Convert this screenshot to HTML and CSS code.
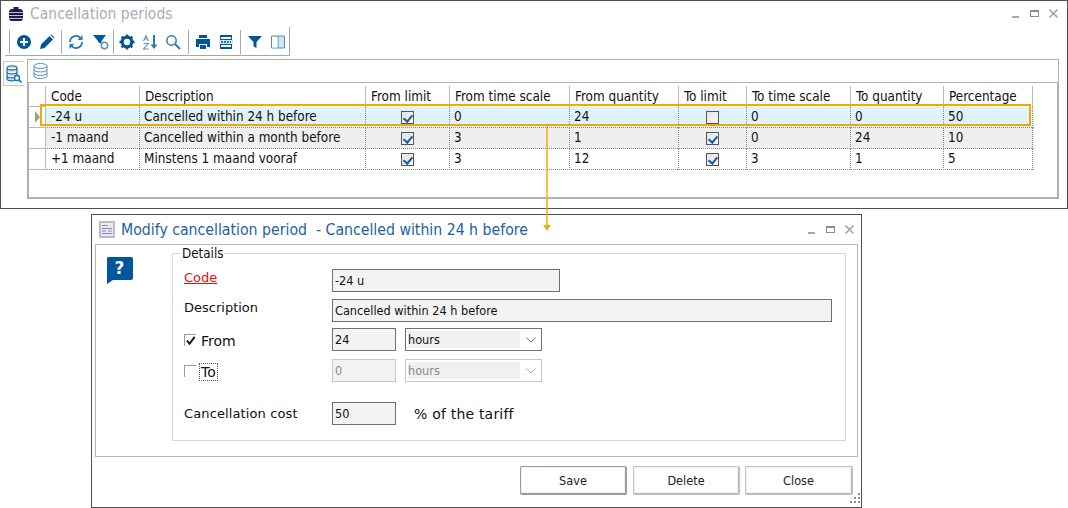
FILE: index.html
```html
<!DOCTYPE html>
<html lang="en">
<head>
<meta charset="utf-8">
<title>Cancellation periods</title>
<link rel="stylesheet" href="styles.css">
</head>
<body>
<div class="desktop">
  <section class="window list-window">
    <header class="list-title">
      <svg class="app-icon" viewBox="0 0 16 16"><path fill="#1d1a55" d="M5.500 1h5v2h2.500l2 2v8.500l-2 1.500h-10l-2-1.500v-8.500l2-2h2.500z"/><path fill="none" stroke="#b9bfd6" d="M1 6.500h14M1 9.500h14M1 12.500h14"/></svg>
      <span class="list-title-text">Cancellation periods</span>
      <div class="win-controls"><i class="c-min"></i><i class="c-max"></i><svg class="c-x" viewBox="0 0 9 9"><path d="M.5.500l8 8M8.500.500l-8 8" stroke="#a9a9a9" stroke-width="1.600"/></svg></div>
    </header>
    <div class="toolbar">
      <div class="tool-group g1">
        <svg viewBox="0 0 16 16"><circle cx="8" cy="8" r="7" fill="#00569c"/><path d="M8 4v8M4 8h8" stroke="#fff" stroke-width="2.200"/></svg>
        <svg viewBox="0 0 16 16"><path fill="#00569c" d="M1 15l1-4.500L10.500 2l3.500 3.500L5.500 14zM11.500 1l1-.500 3 3-.500 1z"/></svg>
      </div>
      <div class="tool-group g2">
        <svg viewBox="0 0 16 16"><path fill="none" stroke="#2d78b8" stroke-width="1.800" d="M2 8a6 6 0 0 1 10.500-4M14 8a6 6 0 0 1-10.500 4"/><path fill="#2d78b8" d="M14.500 1v5h-5zM1.500 15v-5h5z"/></svg>
        <svg viewBox="0 0 16 16"><path fill="#00569c" d="M0 1h13L8.500 7v3L5 8V7z"/><circle cx="11.500" cy="11.500" r="3.200" fill="none" stroke="#5a93c4" stroke-width="1.500"/></svg>
      </div>
      <div class="tool-group g3">
        <svg viewBox="0 0 16 16"><circle cx="8" cy="8" r="4.800" fill="none" stroke="#00569c" stroke-width="3.200"/><path d="M8 .5v15M.5 8h15M2.700 2.700l10.600 10.600M13.300 2.700L2.700 13.300" stroke="#00569c" stroke-width="2.400" stroke-dasharray="2.600 9.800"/></svg>
        <svg viewBox="0 0 16 16"><path fill="none" stroke="#5a93c4" stroke-width="1.100" d="M1.500 7L4 1.500 6.500 7M2.500 5h3M1.500 9.500h5L1.500 15h5"/><path fill="#2d78b8" d="M11 1h2v9.500h2.500L12 15l-3.500-4.500H11z"/></svg>
        <svg viewBox="0 0 16 16"><circle cx="6.500" cy="6.500" r="4.700" fill="none" stroke="#2d78b8" stroke-width="1.500"/><path d="M10 10l5 5" stroke="#2d78b8" stroke-width="2"/></svg>
      </div>
      <div class="tool-group g4">
        <svg viewBox="0 0 16 16"><path fill="#00569c" d="M4 1h8v3H4zM1 5h14v8h-3v-3H4v3H1zM5 11h6v4H5z"/></svg>
        <svg viewBox="0 0 16 16"><path fill="#00569c" d="M2 1h12v14H2z"/><path fill="#fff" d="M3 3h10v2H3zM3 11h10v2H3z"/><path fill="#cfe0ef" d="M1 6h14v4H1z"/><path d="M3 8h10" stroke="#00569c" stroke-width="1.500" stroke-dasharray="2 1"/></svg>
      </div>
      <div class="tool-group g5">
        <svg viewBox="0 0 16 16"><path fill="#00569c" d="M1 2h14L9.500 8v6l-3-1.500V8z"/></svg>
        <svg viewBox="0 0 16 16"><path fill="#d5e4f1" stroke="#4d8ec4" d="M1.500 2h13v12h-13z"/><path stroke="#4d8ec4" d="M8 2v12"/><path fill="#fff" d="M2 3h5.500v10.500H2z"/></svg>
      </div>
    </div>
    <div class="list-body">
      <div class="side-tab">
        <svg viewBox="0 0 16 18"><path fill="#cfe0ef" stroke="#1f6aa6" stroke-width="1.200" d="M1 3c0-3 10-3 10 0v11c0 2.500-10 2.500-10 0zM1 3c0 2.500 10 2.500 10 0M1 7c0 2.500 10 2.500 10 0M1 11c0 2.500 10 2.500 10 0"/><circle cx="11" cy="13" r="2.500" fill="#fff" stroke="#1f6aa6" stroke-width="1.300"/><path d="M13 15l2.500 2.500" stroke="#1f6aa6" stroke-width="1.600"/></svg>
      </div>
      <div class="grid-panel">
        <div class="grid-bar">
          <svg viewBox="0 0 15 16"><g fill="none" stroke="#5a93c4"><ellipse cx="7.500" cy="3" rx="6.500" ry="2.500"/><path d="M1 3v10c0 3.300 13 3.300 13 0V3M1 6.500c0 3.300 13 3.300 13 0M1 10c0 3.300 13 3.300 13 0"/></g></svg>
        </div>
        <div class="grid-area">
          <div class="row head">
            <div class="ind"></div><div>Code</div><div>Description</div><div>From limit</div><div>From time scale</div><div>From quantity</div><div>To limit</div><div>To time scale</div><div>To quantity</div><div>Percentage</div>
          </div>
          <div class="row selected">
            <div class="ind"><i class="pointer"></i></div><div class="code">-24 u</div><div>Cancelled within 24 h before</div><div class="mid"><i class="chk on"></i></div><div>0</div><div>24</div><div class="mid"><i class="chk"></i></div><div>0</div><div>0</div><div>50</div>
          </div>
          <div class="row alt">
            <div class="ind"></div><div class="code">-1 maand</div><div>Cancelled within a month before</div><div class="mid"><i class="chk on"></i></div><div>3</div><div>1</div><div class="mid"><i class="chk on"></i></div><div>0</div><div>24</div><div>10</div>
          </div>
          <div class="row">
            <div class="ind"></div><div class="code">+1 maand</div><div>Minstens 1 maand vooraf</div><div class="mid"><i class="chk on"></i></div><div>3</div><div>12</div><div class="mid"><i class="chk on"></i></div><div>3</div><div>1</div><div>5</div>
          </div>
        </div>
      </div>
    </div>
  </section>

  <section class="window dialog">
    <header class="dlg-title">
      <svg class="dlg-icon" viewBox="0 0 16 17"><path fill="#b9b9d6" d="M0 0h16v17H0z"/><path fill="#e9e9f2" d="M2 2h12v13H2z"/><path stroke="#8a8ab0" stroke-width="1.200" d="M3 4.500h6M3 7.500h10M3 10h4M9 10h4M3 12.500h10"/></svg>
      <span class="dlg-title-text">Modify cancellation period&nbsp; - Cancelled within 24 h before</span>
      <div class="win-controls"><i class="c-min"></i><i class="c-max"></i><svg class="c-x" viewBox="0 0 9 9"><path d="M.5.500l8 8M8.500.500l-8 8" stroke="#a9a9a9" stroke-width="1.600"/></svg></div>
    </header>
    <div class="dlg-panel">
      <svg class="help" viewBox="0 0 27 27"><path fill="#00569c" d="M2 0h23a2 2 0 0 1 2 2v19a2 2 0 0 1-2 2H7l-6 4V2a2 2 0 0 1 1-2z"/></svg>
      <span class="help-mark">?</span>
      <fieldset class="details">
        <legend>Details</legend>
        <div class="form-row r-code"><span class="lbl req">Code</span><span class="inp w228">-24 u</span></div>
        <div class="form-row r-desc"><span class="lbl">Description</span><span class="inp w500">Cancelled within 24 h before</span></div>
        <div class="form-row r-from">
          <span class="lbl chk-lbl"><i class="flat on"><svg viewBox="0 0 12 12"><path d="M2 6l3 3.500L10.500 2" fill="none" stroke="#111" stroke-width="2"/></svg></i><span class="big">From</span></span>
          <span class="inp w65">24</span><span class="sel"><span class="sel-v">hours</span><svg viewBox="0 0 10 6"><path d="M.5.500L5 5 9.500.500" fill="none" stroke="#777"/></svg></span>
        </div>
        <div class="form-row r-to">
          <span class="lbl chk-lbl"><i class="flat"></i><span class="big focus">To</span></span>
          <span class="inp w65 off">0</span><span class="sel off"><span class="sel-v">hours</span><svg viewBox="0 0 10 6"><path d="M.5.500L5 5 9.500.500" fill="none" stroke="#aaa"/></svg></span>
        </div>
        <div class="form-row r-cost"><span class="lbl">Cancellation cost</span><span class="inp w65">50</span><span class="suffix">% of the tariff</span></div>
      </fieldset>
    </div>
    <footer class="dlg-actions">
      <button class="btn save">Save</button><button class="btn">Delete</button><button class="btn close">Close</button>
    </footer>
    <svg class="grip" viewBox="0 0 11 11"><path d="M8 0h2v2H8zM4 4h2v2H4zM8 4h2v2H8zM0 8h2v2H0zM4 8h2v2H4zM8 8h2v2H8z" fill="#8a8a8a"/></svg>
  </section>

  <div class="highlight"></div>
  <svg class="connector" viewBox="0 0 8 107"><path d="M4 0v102" stroke="#f5ac10" stroke-width="1.500"/><path d="M0 100h8l-4 6z" fill="#f5ac10"/></svg>
</div>
</body>
</html>
```
FILE: styles.css
```css
* { box-sizing: border-box; }
html, body { margin: 0; padding: 0; background: #fff; }
body { font-family: "DejaVu Sans", sans-serif; color: #111; }
.desktop { position: relative; width: 1068px; height: 508px; overflow: hidden; background: #fff; }
.window { position: absolute; background: #fff; border: 1px solid #505050; }
.list-window { left: 0; top: 0; width: 1068px; height: 209px; }
.dialog { left: 91px; top: 214px; width: 771px; height: 294px; }

.list-title { display: flex; align-items: center; height: 26px; padding-left: 7px; }
.app-icon { width: 16px; height: 16px; }
.list-title-text { margin-left: 6px; font: 15.500px/26px "DejaVu Sans Condensed", sans-serif; color: #a7aeb8; }
.win-controls { margin-left: auto; display: flex; align-items: center; gap: 9px; padding-right: 9px; margin-bottom: 2px; }
.win-controls i { display: block; }
.c-min { width: 7px; height: 2px; background: #a9a9a9; margin-top: 7px; margin-right: 2px; }
.c-max { width: 9px; height: 7px; border: 1px solid #8a8a8a; border-top-width: 2px; }
.c-x { width: 9px; height: 9px; margin-left: 1px; }

.toolbar { display: flex; align-items: center; width: 285px; height: 29px; margin-left: 4px; border-bottom: 1px solid #a8a8a8; border-right: 1px solid #a8a8a8; padding-left: 4px; padding-top: 1px; }
.tool-group { display: flex; align-items: center; height: 24px; border-left: 1px solid #a8a8a8; }
.tool-group svg { width: 16px; height: 16px; flex: none; }
.g1 { width: 52px; gap: 7px; padding-left: 6px; }
.g2 { width: 52px; gap: 9px; padding-left: 6px; }
.g3 { width: 75px; gap: 7px; padding-left: 5px; }
.g4 { width: 52px; gap: 7px; padding-left: 6px; }
.g5 { width: 48px; gap: 7px; padding-left: 6px; }

.list-body { display: flex; align-items: flex-start; margin-top: 3px; padding-left: 2px; }
.side-tab { width: 21px; height: 25px; margin-top: 2px; border: 1px solid #c8c8c8; border-right: 0; display: flex; align-items: center; justify-content: center; }
.side-tab svg { width: 16px; height: 18px; }
.grid-panel { width: 1032px; margin-left: 3px; }
.grid-bar { height: 24px; border: 1px solid #b0b0b0; padding: 3px 0 0 5px; }
.grid-bar svg { display: block; width: 15px; height: 16px; }
.grid-area { height: 116px; border: solid #b0b0b0; border-width: 0 2px 2px 2px; padding-top: 3px; }
.row { display: grid; grid-template-columns: 17px 94px 226px 84px 120px 109px 68px 104px 93px 89px; width: 1005px; height: 21px; font: 13.400px/20px "DejaVu Sans Condensed", sans-serif; border-bottom: 1px dotted #8c8c8c; }
.row > div { padding-left: 4px; border-right: 1px dotted #8c8c8c; white-space: nowrap; overflow: hidden; }
.row > div.code { padding-left: 5px; }
.row > div.ind { padding: 0; border-right: 1px solid #b8b8b8; border-bottom: 1px solid #b8b8b8; height: 21px; display: flex; align-items: center; padding-left: 6px; }
.head { border-bottom: 0; }
.head > div { padding: 1px 0 0 5px; border-right: 1px solid #b8b8b8; }
.selected { background: #e0f3fd; }
.alt { background: #efefef; }
.selected .ind, .alt .ind { background: #fff; }
.pointer { display: block; width: 0; height: 0; border-left: 5px solid #9a9a9a; border-top: 6px solid transparent; border-bottom: 6px solid transparent; }
.mid { display: flex; align-items: center; justify-content: center; padding: 0 !important; }
.chk { position: relative; display: block; width: 13px; height: 13px; border: 1px solid #555; background: linear-gradient(135deg, #e4e4e4, #fafafa); }
.chk.on::after { content: ""; position: absolute; left: 3px; top: 1px; width: 4px; height: 7px; border: solid #0f5ea8; border-width: 0 2px 2px 0; transform: rotate(40deg); }

.highlight { position: absolute; left: 40px; top: 104px; width: 991px; height: 22px; border: 2px solid #f4a900; }
.connector { position: absolute; left: 543px; top: 125px; width: 8px; height: 107px; }

.dlg-title { display: flex; align-items: center; height: 29px; padding-left: 7px; }
.dlg-title .win-controls { padding-right: 7px; margin-bottom: 1px; }
.dlg-icon { width: 16px; height: 17px; }
.dlg-title-text { margin-left: 6px; font: 15.700px/29px "DejaVu Sans Condensed", sans-serif; color: #1e5fa4; white-space: nowrap; }
.dlg-panel { position: relative; height: 213px; margin: 0 3px; border: 1px solid #b8b8b8; padding: 0 11px 0 76px; }
.help { position: absolute; left: 10px; top: 12px; width: 27px; height: 27px; }
.help-mark { position: absolute; left: 10px; top: 11px; width: 27px; height: 24px; text-align: center; font: bold 17px/24px "DejaVu Sans", sans-serif; color: #fff; }
.details { display: block; margin: 0; min-width: 0; height: 196px; padding: 0 0 0 11px; border: 1px solid #d8d8d8; }
.details legend { padding: 0 1px; margin-left: -3px; font: 13.300px/17px "DejaVu Sans Condensed", sans-serif; height: 17px; }
.form-row { display: grid; grid-template-columns: 148px auto 1fr; align-items: center; height: 23px; font-size: 13px; }
.form-row > .inp + .sel { margin-left: 9px; }
.r-code { margin-top: 7px; }
.r-desc { margin-top: 7px; }
.r-from { margin-top: 6px; grid-template-columns: 148px 64px 146px; }
.r-to { margin-top: 8px; grid-template-columns: 148px 64px 146px; }
.r-cost { margin-top: 20px; grid-template-columns: 148px 64px 1fr; }
.lbl { white-space: nowrap; }
.r-cost .lbl { letter-spacing: .12px; }
.req { color: #e01010; text-decoration: underline; align-self: start; line-height: 17px; }
.r-desc .lbl { align-self: start; line-height: 17px; }
.inp { display: block; height: 100%; padding-left: 2px; background: #f3f3f3; border: 1px solid #707070; font: 12.600px/21px "DejaVu Sans Condensed", sans-serif; white-space: nowrap; overflow: hidden; }
.w228 { width: 228px; }
.w500 { width: 500px; }
.w65 { width: 64px; }
.inp.off { border-color: #c8c8c8; color: #8a8a8a; }
.sel { display: flex; align-items: center; justify-content: space-between; width: 137px; height: 100%; padding: 2px 5px 2px 2px; border: 1px solid #707070; background: #fff; font: 12.600px "DejaVu Sans Condensed", sans-serif; }
.sel.off { border-color: #c8c8c8; color: #8a8a8a; }
.sel-v { flex: none; width: 112px; height: 100%; background: #f0f0f0; display: flex; align-items: center; }
.sel svg { width: 10px; height: 6px; }
.chk-lbl { display: flex; align-items: center; }
.flat { display: flex; width: 12px; height: 12px; border-top: 1px solid #9a9a9a; border-left: 1px solid #9a9a9a; margin-right: 5px; }
.flat svg { width: 11px; height: 11px; }
.big { margin-top: 2px; font-size: 14px; line-height: 16px; }
.focus { outline: 1px dotted #555; padding: 0 1px; margin-left: -1px; }
.suffix { margin-left: 18px; font-size: 14px; letter-spacing: .2px; }

.dlg-actions { display: flex; justify-content: flex-end; padding: 9px 8px 0 0; gap: 6px; }
.btn { width: 107px; height: 29px; padding: 0; background: #fff; border: 1px solid #c4c4c4; border-right: 2px solid #bcbcbc; border-bottom: 2px solid #bcbcbc; border-radius: 2px; box-shadow: inset 0 0 0 1px #f0f0f0; font: 12.600px "DejaVu Sans Condensed", sans-serif; color: #222; }
.save { border-color: #9c9c9c; }
.close { width: 108px; margin-left: -1px; }
.grip { position: absolute; right: 0; bottom: 3px; width: 11px; height: 11px; }
```
